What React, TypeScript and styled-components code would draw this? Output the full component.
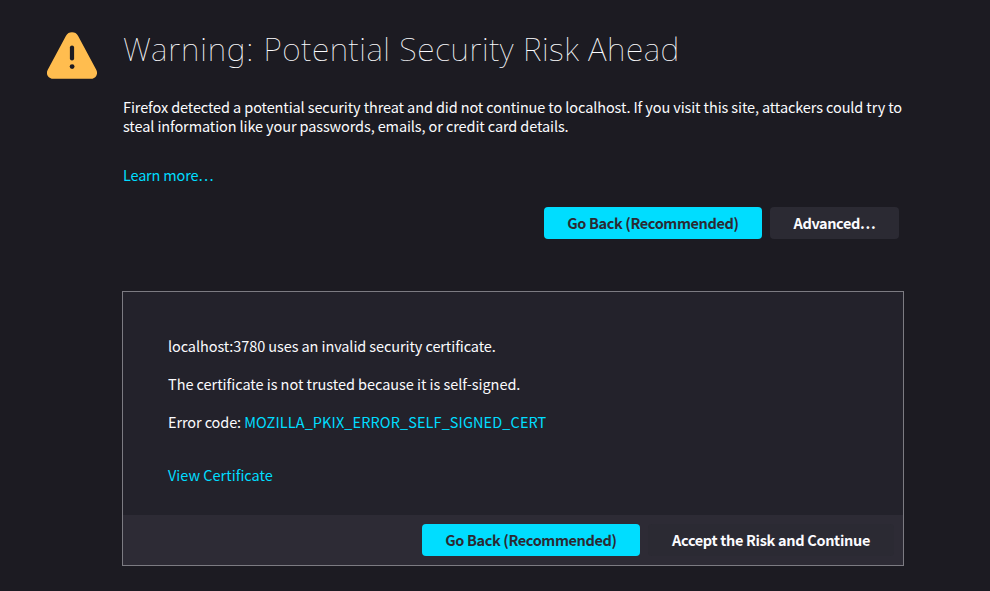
import React from "react";
import styled, { createGlobalStyle } from "styled-components";

const GlobalStyle = createGlobalStyle`
  * { box-sizing: border-box; }
  body { margin: 0; background: #1c1b22; color: #fbfbfe; font: 14.5px/19px "Noto Sans CJK SC", "Noto Sans", sans-serif; }
  h1, p { margin: 0; }
`;
const Page = styled.main`
  display: grid;
  grid-template-columns: 50px 782px;
  column-gap: 25px;
  width: 990px;
  height: 591px;
  padding: 32px 0 0 47px;
`;
const WarningIcon = styled.svg`display: block; width: 50px; height: 47px;`;
const Title = styled.h1`
  height: 36px;
  padding-left: 1px;
  font-family: "Noto Sans", sans-serif;
  font-size: 32px;
  font-weight: 100;
  line-height: 34px;
  letter-spacing: 0.52px;
  white-space: nowrap;
`;
const Text = styled.span<{ $track: number }>`
  letter-spacing: ${(p) => p.$track}px;
  white-space: nowrap;
`;
const Line = styled(Text)`display: block;`;
const Link = styled.a<{ $track: number }>`
  color: #00ddff;
  letter-spacing: ${(p) => p.$track}px;
  text-decoration: none;
  white-space: nowrap;
`;
const Intro = styled.p`margin-top: 29px; padding-left: 1px;`;
const More = styled.p`margin-top: 30px; padding-left: 1px;`;
const Actions = styled.div`
  display: flex;
  justify-content: flex-end;
  gap: 8px;
  margin: 23px 5px 0 0;
`;
const Button = styled.button<{ $primary?: boolean; $width: number; $track: number }>`
  width: ${(p) => p.$width}px;
  height: 32px;
  padding: 0 0 2px;
  border: 0;
  border-radius: 4px;
  background: ${(p) => (p.$primary ? "#00ddff" : "#2b2a33")};
  color: ${(p) => (p.$primary ? "#2b2a33" : "#fbfbfe")};
  font: 600 14.5px/19px "Noto Sans CJK SC", sans-serif;
  letter-spacing: ${(p) => p.$track}px;
  white-space: nowrap;
`;
const Panel = styled.section`
  margin-top: 52px;
  width: 782px;
  height: 275px;
  border: 1px solid #7c7b82;
  background: #23222b;
`;
const Details = styled.div`height: 223px; padding: 44px 45px 0;`;
const Paragraph = styled.p<{ $gap?: number }>`margin-top: ${(p) => p.$gap ?? 0}px;`;
const PanelFooter = styled.footer`
  display: flex;
  justify-content: flex-end;
  align-items: center;
  gap: 8px;
  height: 50px;
  padding-right: 9px;
  background: #2d2b35;
`;

export default function App() {
  return (
    <>
      <GlobalStyle />
      <Page>
        <WarningIcon viewBox="0 0 50 47" aria-hidden="true">
          <path d="M19 3.7Q21 .3 25 .3T31 3.7L49.1 37.4Q51 41 49.2 43.9T43.5 46.7H6.5Q2.7 46.7.8 43.9T.9 37.4Z" fill="#ffbd4f" />
          <path d="M25 15.6V26.4" stroke="#1c1b22" strokeWidth="4.2" strokeLinecap="round" />
          <circle cx="25.1" cy="34.6" r="2.4" fill="#1c1b22" />
        </WarningIcon>
        <div>
          <Title><Text $track={0.84}>Warning: </Text>Potential Security Risk Ahead</Title>
          <Intro>
            <Line $track={-0.11}>Firefox detected a potential security threat and did not continue to localhost. If you visit this site, attackers could try to</Line>
            <Line $track={-0.11}>steal information like your passwords, emails, or credit card details.</Line>
          </Intro>
          <More><Link $track={-0.18}>Learn more…</Link></More>
          <Actions>
            <Button $primary $width={218} $track={-0.37}>Go Back (Recommended)</Button>
            <Button $width={129} $track={-0.4}>Advanced…</Button>
          </Actions>
          <Panel>
            <Details>
              <Paragraph><Text $track={-0.09}>localhost:3780 uses an invalid security certificate.</Text></Paragraph>
              <Paragraph $gap={19}><Text $track={-0.04}>The certificate is not trusted because it is self-signed.</Text></Paragraph>
              <Paragraph $gap={19}><Text $track={-0.11}>Error code: </Text><Link $track={0.1}>MOZILLA_PKIX_ERROR_SELF_SIGNED_CERT</Link></Paragraph>
              <Paragraph $gap={34}><Link $track={0}>View Certificate</Link></Paragraph>
            </Details>
            <PanelFooter>
              <Button $primary $width={218} $track={-0.37}>Go Back (Recommended)</Button>
              <Button $width={246} $track={-0.32}>Accept the Risk and Continue</Button>
            </PanelFooter>
          </Panel>
        </div>
      </Page>
    </>
  );
}
